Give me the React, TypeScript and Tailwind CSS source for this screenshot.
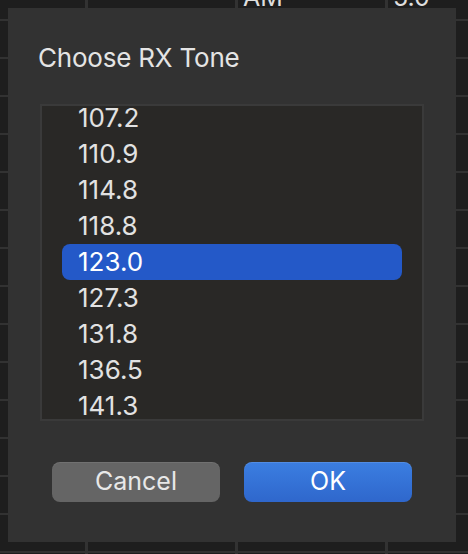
import React, { useState } from 'react';

const TONES = ['107.2', '110.9', '114.8', '118.8', '123.0', '127.3', '131.8', '136.5', '141.3', '146.2'];

const FONT = { fontFamily: 'Inter, "Liberation Sans", sans-serif' };

const BackgroundGrid: React.FC = () => {
  const rows = Array.from({ length: 15 });
  return (
    <div className="grid h-[554px] grid-cols-[85px_147px_147px_1fr] grid-rows-[19px_repeat(15,36px)] gap-x-[3px] gap-y-[2px] overflow-hidden bg-[#323232]">
      {/* partial row at the top, text scrolled mostly out of view */}
      <div className="bg-[#1e1e1e]" />
      <div className="bg-[#1e1e1e]" />
      <div className="flex items-end overflow-hidden bg-[#1e1e1e] pl-[5px]">
        <span className="mb-[8px] text-[25px] leading-[28px] text-[#dedede]">AM</span>
      </div>
      <div className="flex items-end overflow-hidden bg-[#1e1e1e] pl-[5px]">
        <span className="mb-[8px] text-[25px] leading-[28px] text-[#dedede]">5.0</span>
      </div>
      {rows.map((_, r) => (
        <React.Fragment key={r}>
          <div className="bg-[#1e1e1e]" />
          <div className="bg-[#1e1e1e]" />
          <div className="bg-[#1e1e1e]" />
          <div className="bg-[#1e1e1e]" />
        </React.Fragment>
      ))}
    </div>
  );
};

const App: React.FC = () => {
  const [selected, setSelected] = useState('123.0');

  return (
    <div className="relative h-[554px] w-[468px] overflow-hidden bg-[#1e1e1e]" style={FONT}>
      <BackgroundGrid />

      {/* Modal sheet */}
      <div className="absolute left-[8px] top-[8px] flex h-[534px] w-[448px] flex-col bg-[#323232]">
        <h2 className="ml-[30px] mt-[35px] text-[26px] font-normal leading-[30px] tracking-[-0.2px] text-[#e4e4e4]">
          Choose RX Tone
        </h2>

        {/* Tone list */}
        <div className="mx-[32px] mt-[31px] h-[317px] overflow-hidden border-2 border-[#3a3a3a] bg-[#292826]">
          <div className="-mt-[6px] flex flex-col">
            {TONES.map((tone) => {
              const active = tone === selected;
              return (
                <button
                  key={tone}
                  onClick={() => setSelected(tone)}
                  className={`mx-[20px] flex h-[36px] shrink-0 items-center rounded-[8px] pl-[16px] text-left text-[26px] leading-none ${
                    active ? 'bg-[#2459c8] text-white' : 'text-[#e2e2e2]'
                  }`}
                >
                  {tone}
                </button>
              );
            })}
          </div>
        </div>

        {/* Actions */}
        <div className="mt-[41px] flex justify-center gap-[24px]">
          <button className="h-[40px] w-[168px] rounded-[8px] bg-[#656565] text-[25px] text-[#e8e8e8] shadow-[inset_0_1px_0_rgba(255,255,255,0.08)]">
            Cancel
          </button>
          <button className="h-[40px] w-[168px] rounded-[8px] bg-gradient-to-b from-[#3b7ee1] to-[#2f67cc] text-[25px] text-white shadow-[inset_0_1px_0_rgba(255,255,255,0.12)]">
            OK
          </button>
        </div>
      </div>
    </div>
  );
};

export default App;
